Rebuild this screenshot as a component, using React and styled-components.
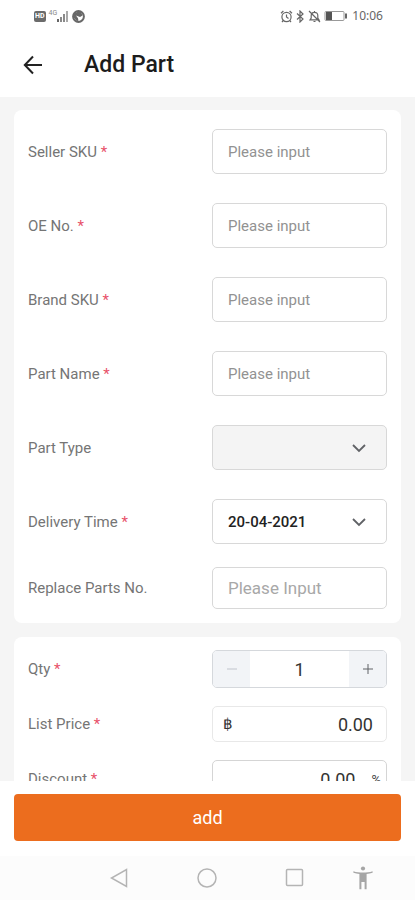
import React, { useState } from 'react';
import styled, { createGlobalStyle } from 'styled-components';

const textFields = [
    { id: 'sellerSku', label: 'Seller SKU' },
    { id: 'oeNo', label: 'OE No.' },
    { id: 'brandSku', label: 'Brand SKU' },
    { id: 'partName', label: 'Part Name' },
];

const FieldLabel = ({ htmlFor, required, children }) => (
    <Label htmlFor={htmlFor}>
        {children}
        {required && <Required> *</Required>}
    </Label>
)

const Chevron = () => (
    <ChevronIcon width="14" height="10" viewBox="0 0 14 10" aria-hidden="true">
        <path d="M1 2l6 6 6-6" fill="none" stroke="#606266" strokeWidth="1.800" />
    </ChevronIcon>
)

const StatusBar = () => (
    <Status>
        <StatusGroup>
            <HdBadge>HD</HdBadge>
            <Signal>
                <Network>4G</Network>
                <svg width="12" height="12" viewBox="0 0 12 12" fill="#8a8a8a">
                    <rect x="0" y="9" width="2" height="3" fill="#666" />
                    <rect x="3" y="7" width="2" height="5" />
                    <rect x="6" y="4" width="2" height="8" />
                    <rect x="9" y="1" width="2" height="11" fill="#aaa" />
                </svg>
            </Signal>
            <svg width="13" height="13" viewBox="0 0 13 13">
                <circle cx="6.500" cy="6.500" r="5.400" fill="#fff" stroke="#686868" strokeWidth="2" />
                <path d="M6 1.500L2 3.500V8l3 3 1.500-.3L6 8.300 4 5.500l4 1.500 2.500-1.500L9 2z" fill="#686868" />
            </svg>
        </StatusGroup>
        <StatusGroup>
            <svg width="13" height="13" viewBox="0 0 13 13" fill="none" stroke="#666" strokeWidth="1.200">
                <circle cx="6.500" cy="7" r="4.600" />
                <path d="M1 3.200l2.400-2.200M12 3.200L9.600 1M6.500 4.500V7l2 1.500M3.300 10.500L2 12M9.700 10.500L11 12" />
            </svg>
            <svg width="9" height="13" viewBox="0 0 9 13" fill="none" stroke="#666" strokeWidth="1.200">
                <path d="M1 3.500l6 5.500L4 12V1l3 3-6 5.500" />
            </svg>
            <svg width="13" height="13" viewBox="0 0 13 13" fill="none" stroke="#666" strokeWidth="1.200">
                <path d="M2 9.800h9L9.800 8V5.500C9.800 3.500 8.500 2.300 6.500 2.300S3.200 3.500 3.200 5.500V8zM5.500 11.500h2M6.500 1v1.300M1 1l11 11" />
            </svg>
            <svg width="23" height="12" viewBox="0 0 23 12">
                <rect x="1" y="1.500" width="19" height="9" rx="1" fill="#fff" stroke="#999" />
                <rect x="2" y="2" width="6" height="8" fill="#555" />
                <rect x="21" y="3.500" width="2" height="5" fill="#666" />
            </svg>
            <Clock>10:06</Clock>
        </StatusGroup>
    </Status>
)

const NavBar = () => (
    <Nav>
        <NavButton type="button" aria-label="Back">
            <svg width="20" height="20" viewBox="0 0 20 20">
                <path d="M17.500 1.500v17L2.500 10z" />
            </svg>
        </NavButton>
        <NavButton type="button" aria-label="Home">
            <svg width="20" height="20" viewBox="0 0 20 20">
                <circle cx="10" cy="10" r="9" />
            </svg>
        </NavButton>
        <NavButton type="button" aria-label="Recent apps">
            <svg width="20" height="20" viewBox="0 0 20 20">
                <rect x="1.500" y="1.500" width="16" height="16" rx="1" />
            </svg>
        </NavButton>
        <NavButton type="button" aria-label="Accessibility" $narrow>
            <svg width="20" height="24" viewBox="0 0 20 24">
                <circle cx="10" cy="2.500" r="2.100" fill="#a6a6a6" stroke="none" />
                <path
                    d="M.4 5.200C3.500 6.200 6.500 6.500 10 6.500s6.500-.3 9.600-1.300v1.600c-2 .7-4 1-6 1.200v15.200h-2V16h-3.200v7.200h-2V8c-2-.2-4-.5-6-1.200z"
                    fill="#a6a6a6"
                    stroke="none"
                />
            </svg>
        </NavButton>
    </Nav>
)

const App = () => {
    const [qty, setQty] = useState(1);

    return (
        <Screen>
            <GlobalStyle />
            <StatusBar />
            <Header>
                <BackButton type="button" aria-label="Go back">
                    <svg width="20" height="20" viewBox="0 0 20 20" fill="none" stroke="#222" strokeWidth="2">
                        <path d="M19 10H2M10 1.500L1.800 10l8.200 8.500" />
                    </svg>
                </BackButton>
                <Title>Add Part</Title>
            </Header>

            <Content>
                <Card>
                    {
                        textFields.map(({ id, label }) => (
                            <Row key={id}>
                                <FieldLabel htmlFor={id} required>{label}</FieldLabel>
                                <Input id={id} type="text" placeholder="Please input" />
                            </Row>
                        ))
                    }
                    <Row>
                        <FieldLabel htmlFor="partType">Part Type</FieldLabel>
                        <SelectBox>
                            <Select id="partType" disabled />
                            <Chevron />
                        </SelectBox>
                    </Row>
                    <Row>
                        <FieldLabel htmlFor="deliveryTime" required>Delivery Time</FieldLabel>
                        <SelectBox>
                            <Select id="deliveryTime">
                                <option>20-04-2021</option>
                            </Select>
                            <Chevron />
                        </SelectBox>
                    </Row>
                    <Row $last>
                        <FieldLabel htmlFor="replaceNo">Replace Parts No.</FieldLabel>
                        <Input id="replaceNo" type="text" placeholder="Please Input" $large />
                    </Row>
                </Card>

                <Card $compact>
                    <Row $compact>
                        <FieldLabel htmlFor="qty" required>Qty</FieldLabel>
                        <Stepper>
                            <StepButton type="button" aria-label="Decrease" disabled={qty <= 1} onClick={() => setQty(qty - 1)}>
                                <svg width="12" height="12" viewBox="0 0 12 12" stroke="currentColor">
                                    <path d="M1 6h10" />
                                </svg>
                            </StepButton>
                            <QtyInput id="qty" type="text" value={qty} readOnly />
                            <StepButton type="button" aria-label="Increase" onClick={() => setQty(qty + 1)}>
                                <svg width="12" height="12" viewBox="0 0 12 12" stroke="currentColor">
                                    <path d="M1 6h10M6 1v10" />
                                </svg>
                            </StepButton>
                        </Stepper>
                    </Row>
                    <Row $compact>
                        <FieldLabel htmlFor="listPrice" required>List Price</FieldLabel>
                        <AmountBox $light>
                            <Unit>฿</Unit>
                            <Amount id="listPrice" type="text" defaultValue="0.00" />
                        </AmountBox>
                    </Row>
                    <Row $compact>
                        <FieldLabel htmlFor="discount" required>Discount</FieldLabel>
                        <AmountBox>
                            <Amount id="discount" type="text" defaultValue="0.00" />
                            <Percent>%</Percent>
                        </AmountBox>
                    </Row>
                </Card>
            </Content>

            <Footer>
                <AddButton type="button">add</AddButton>
            </Footer>
            <NavBar />
        </Screen>
    );
}

const GlobalStyle = createGlobalStyle`
    * {
        box-sizing: border-box;
    }
    body {
        margin: 0;
        background: #fff;
    }
    body, button, input, select {
        font-family: Roboto, "Liberation Sans", sans-serif;
    }
`

const Screen = styled.div`
    display: flex;
    flex-direction: column;
    height: 100vh;
    background: #fff;
`

const Status = styled.div`
    display: flex;
    flex-shrink: 0;
    align-items: center;
    justify-content: space-between;
    height: 32px;
    padding: 0 32px 0 34px;
`

const StatusGroup = styled.div`
    display: flex;
    align-items: center;
    gap: 3px;
`

const HdBadge = styled.span`
    padding: 0 1px;
    border-radius: 2px;
    background: #6b6b6b;
    color: #fff;
    font-size: 7px;
    font-weight: 700;
    line-height: 11px;
`

const Signal = styled.div`
    display: flex;
`

const Network = styled.span`
    color: #888;
    font-size: 7px;
    line-height: 7px;
`

const Clock = styled.span`
    margin-left: 2px;
    color: #666;
    font-family: "Noto Sans", sans-serif;
    font-size: 12px;
    line-height: 16px;
`

const Header = styled.header`
    display: flex;
    flex-shrink: 0;
    align-items: center;
    gap: 41px;
    height: 65px;
    padding: 0 23px;
`

const BackButton = styled.button`
    display: flex;
    padding: 0;
    border: 0;
    background: none;
`

const Title = styled.h1`
    margin: 0;
    color: #1c1c1c;
    font-size: 23px;
    font-weight: 500;
    line-height: 28px;
`

const Content = styled.main`
    display: flex;
    flex: 1;
    flex-direction: column;
    gap: 14px;
    min-height: 0;
    padding: 13px 14px;
    overflow-y: auto;
    background: #f5f5f5;
    scrollbar-width: none;
`

const Card = styled.section`
    flex-shrink: 0;
    padding: ${({ $compact }) => ($compact ? '13px 14px' : '19px 14px 14px')};
    border-radius: 8px;
    background: #fff;
`

const Row = styled.div`
    display: grid;
    grid-template-columns: 1fr 175px;
    align-items: center;
    height: ${({ $compact, $last }) => ($compact ? '38px' : $last ? '42px' : '45px')};
    margin-bottom: ${({ $compact }) => ($compact ? '17px' : '29px')};

    &:nth-last-child(2) {
        margin-bottom: ${({ $compact }) => ($compact ? '17px' : '23px')};
    }
    &:last-child {
        margin-bottom: 0;
    }
`

const Label = styled.label`
    color: #757575;
    font-size: 15px;
    line-height: 20px;
`

const Required = styled.span`
    color: #e8516a;
`

const Input = styled.input`
    width: 100%;
    height: 100%;
    padding: 0 15px;
    border: 1px solid #d8d8d8;
    border-radius: 5px;
    outline: none;
    background: #fff;
    color: #333;
    font-size: ${({ $large }) => ($large ? '17px' : '15px')};

    &::placeholder {
        color: ${({ $large }) => ($large ? '#a8a8a8' : '#929292')};
    }
`

const SelectBox = styled.div`
    display: grid;
    align-items: center;
    height: 100%;
`

const Select = styled.select`
    grid-area: 1 / 1;
    width: 100%;
    height: 100%;
    padding: 0 15px;
    appearance: none;
    border: 1px solid #d8d8d8;
    border-radius: 5px;
    outline: none;
    background: #fff;
    color: #222;
    font-size: 15px;
    font-weight: 500;

    &:disabled {
        background: #f4f4f4;
        opacity: 1;
    }
`

const ChevronIcon = styled.svg`
    grid-area: 1 / 1;
    justify-self: end;
    margin-right: 21px;
    pointer-events: none;
`

const Stepper = styled.div`
    display: flex;
    height: 100%;
    overflow: hidden;
    border: 1px solid #d5d8dc;
    border-radius: 5px;
`

const StepButton = styled.button`
    display: flex;
    flex: 0 0 37px;
    align-items: center;
    justify-content: center;
    padding: 0;
    border: 0;
    background: #f2f4f7;
    color: #606266;

    &:disabled {
        color: #c0c4cc;
    }
`

const QtyInput = styled.input`
    flex: 1;
    min-width: 0;
    padding: 0;
    border: 0;
    outline: none;
    color: #333;
    font-size: 18px;
    text-align: center;
`

const AmountBox = styled.div`
    display: flex;
    align-items: center;
    height: ${({ $light }) => ($light ? '36px' : '38px')};
    padding: 0 ${({ $light }) => ($light ? '13px' : '5px')} 0 10px;
    border: 1px solid ${({ $light }) => ($light ? '#e8e8e8' : '#d5d5d5')};
    border-radius: 5px;
`

const Unit = styled.span`
    color: #333;
    font-size: 15px;
    font-weight: 500;
`

const Percent = styled.span`
    margin-left: 16px;
    color: #444;
    font-size: 13px;
`

const Amount = styled.input`
    flex: 1;
    min-width: 0;
    padding: 0;
    border: 0;
    outline: none;
    color: #333;
    font-size: 18px;
    text-align: right;
`

const Footer = styled.footer`
    flex-shrink: 0;
    padding: 13px 14px 15px;
    background: #fff;
`

const AddButton = styled.button`
    width: 100%;
    height: 47px;
    border: 0;
    border-radius: 4px;
    background: #ec6d1e;
    color: #fff;
    font-size: 18px;
`

const Nav = styled.nav`
    display: flex;
    flex-shrink: 0;
    align-items: center;
    justify-content: center;
    height: 44px;
    padding: 0 29px 0 75px;
    background: #fcfcfc;
`

const NavButton = styled.button`
    display: flex;
    justify-content: center;
    width: ${({ $narrow }) => ($narrow ? '47px' : '88px')};
    padding: 0;
    border: 0;
    background: none;

    svg {
        fill: none;
        stroke: #b4b4b4;
        stroke-width: 1.5;
    }
`

export default App;
